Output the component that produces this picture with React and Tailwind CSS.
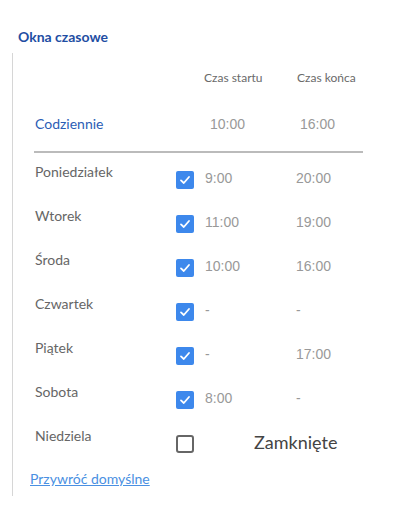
const DAYS = [
  { name: 'Poniedziałek', on: true, start: '9:00', end: '20:00' },
  { name: 'Wtorek', on: true, start: '11:00', end: '19:00' },
  { name: 'Środa', on: true, start: '10:00', end: '16:00' },
  { name: 'Czwartek', on: true, start: '-', end: '-' },
  { name: 'Piątek', on: true, start: '-', end: '17:00' },
  { name: 'Sobota', on: true, start: '8:00', end: '-' },
  { name: 'Niedziela', on: false },
];

function Checkbox({ checked }) {
  if (!checked) {
    return <div className="w-[18px] h-[18px] rounded-[3px] border-2 border-[#666]" />;
  }
  return (
    <div className="w-[18px] h-[18px] rounded-[2px] bg-[#3d88ec] flex items-center justify-center">
      <svg width="12" height="12" viewBox="0 0 12 12" fill="none">
        <path d="M2 6.4 L4.8 9 L10 3" stroke="white" strokeWidth="1.8" strokeLinecap="round" strokeLinejoin="round" />
      </svg>
    </div>
  );
}

export default function App() {
  const label = { fontFamily: 'Lato, "Noto Sans", sans-serif' };
  const mono = { fontFamily: '"Liberation Sans", Arial, sans-serif' };

  return (
    <div className="w-[416px] h-[529px] bg-white pt-[28px]" style={label}>
      <h2 className="pl-[18px] text-[14px] leading-[18px] font-bold text-[#1f4ea3]">Okna czasowe</h2>

      {/* bordered section */}
      <div className="ml-[12px] mt-[7px] border-l border-[#d6d6d6] pt-[18px] pb-[8px] w-[360px]">
        {/* headers */}
        <div className="flex text-[12px] leading-[14px] text-[#6a6a6a]">
          <div className="w-[191px] shrink-0" />
          <div className="w-[93px] shrink-0">Czas startu</div>
          <div>Czas końca</div>
        </div>

        {/* everyday */}
        <div className="flex mt-[30px] pl-[22px] text-[14px] leading-[18px]">
          <div className="w-[175px] text-[#2b5db5]">Codziennie</div>
          <div className="w-[90px] text-[#999]" style={mono}>10:00</div>
          <div className="text-[#999]" style={mono}>16:00</div>
        </div>

        <div className="ml-[21px] mt-[18px] h-[2px] w-[329px] bg-[#bbbbbb]" />

        {/* days */}
        <div className="mt-[10px] pl-[22px]">
          {DAYS.map((d) => (
            <div key={d.name} className="flex h-[44px]">
              <div className="w-[141px] text-[14px] leading-[18px] text-[#666]">{d.name}</div>
              <div className="mt-[8px]">
                <Checkbox checked={d.on} />
              </div>
              {d.on ? (
                <>
                  <div className="ml-[11px] w-[91px] mt-[6px] text-[14px] leading-[18px] text-[#999]" style={mono}>{d.start}</div>
                  <div className="mt-[6px] text-[14px] leading-[18px] text-[#999]" style={mono}>{d.end}</div>
                </>
              ) : (
                <div className="ml-[60px] mt-[4px] text-[18px] leading-[22px] text-[#444]">Zamknięte</div>
              )}
            </div>
          ))}
        </div>

        <a href="#" className="block pl-[17px] -mt-[1px] text-[14px] leading-[18px] text-[#4a90e2] underline">
          Przywróć domyślne
        </a>
      </div>
    </div>
  );
}
